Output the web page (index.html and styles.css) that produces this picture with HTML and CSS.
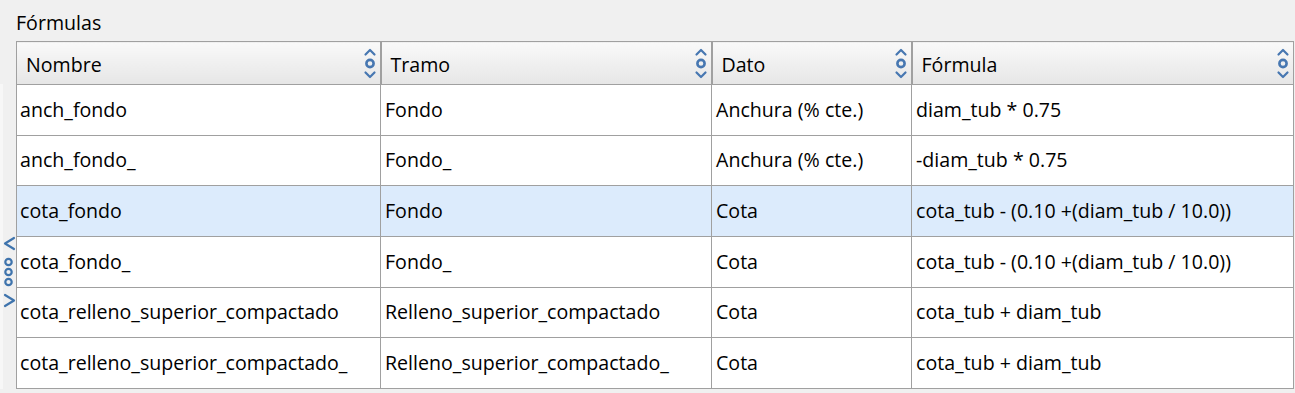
FILE: index.html
```html
<!DOCTYPE html>
<html lang="es">
<head>
<meta charset="utf-8">
<link rel="stylesheet" href="styles.css">
</head>
<body>
<div class="panel">
  <div class="title">Fórmulas</div>
  <div class="main">
    <div class="side">
      <div class="splitter">
        <svg width="14" height="72" viewBox="0 0 14 72">
          <g fill="none" stroke="#3f74ad" stroke-width="2.2" stroke-linecap="round" stroke-linejoin="round">
            <path d="M12 2 L3 7.5 L12 13"/>
            <circle cx="6.5" cy="26" r="3.2"/>
            <circle cx="6.5" cy="36" r="3.2"/>
            <circle cx="6.5" cy="46" r="3.2"/>
            <path d="M3 59 L12 64.5 L3 70"/>
          </g>
        </svg>
      </div>
    </div>
    <table class="grid">
      <colgroup>
        <col class="c1"><col class="c2"><col class="c3"><col class="c4">
      </colgroup>
      <thead>
        <tr>
          <th><span>Nombre</span><i class="sort"></i></th>
          <th><span>Tramo</span><i class="sort"></i></th>
          <th><span>Dato</span><i class="sort"></i></th>
          <th><span>Fórmula</span><i class="sort"></i></th>
        </tr>
      </thead>
      <tbody>
        <tr><td>anch_fondo</td><td>Fondo</td><td>Anchura (% cte.)</td><td>diam_tub * 0.75</td></tr>
        <tr><td>anch_fondo_</td><td>Fondo_</td><td>Anchura (% cte.)</td><td>-diam_tub * 0.75</td></tr>
        <tr class="sel"><td>cota_fondo</td><td>Fondo</td><td>Cota</td><td>cota_tub - (0.10 +(diam_tub / 10.0))</td></tr>
        <tr><td>cota_fondo_</td><td>Fondo_</td><td>Cota</td><td>cota_tub - (0.10 +(diam_tub / 10.0))</td></tr>
        <tr><td>cota_relleno_superior_compactado</td><td>Relleno_superior_compactado</td><td>Cota</td><td>cota_tub + diam_tub</td></tr>
        <tr><td>cota_relleno_superior_compactado_</td><td>Relleno_superior_compactado_</td><td>Cota</td><td>cota_tub + diam_tub</td></tr>
      </tbody>
    </table>
  </div>
</div>
</body>
</html>
```

FILE: styles.css
```css
html, body {
  margin: 0;
  padding: 0;
  background: #f0f0f0;
}
body {
  width: 1295px;
  height: 393px;
  overflow: hidden;
  font-family: "Open Sans", "Noto Sans", sans-serif;
  font-size: 19.6px;
  color: #000;
}
.panel {
  display: flex;
  flex-direction: column;
}
.title {
  height: 41px;
  box-sizing: border-box;
  padding: 10px 0 0 16px;
  line-height: 26px;
}
.main {
  display: flex;
}
.side {
  width: 16px;
  flex: none;
  position: relative;
}
.side::before {
  content: "";
  position: absolute;
  left: 0;
  top: 43px;
  bottom: 0;
  width: 3px;
  background: #f7f7f7;
}
.splitter {
  position: absolute;
  left: 2px;
  top: 195px;
}
.splitter svg { display: block; }
.grid {
  border-collapse: collapse;
  table-layout: fixed;
  width: 1277px;
  background: #fff;
}
.c1 { width: 364px; }
.c2 { width: 331px; }
.c3 { width: 200px; }
.c4 { width: 382px; }
.grid th {
  height: 43px;
  box-sizing: border-box;
  border: 1px solid #a0a0a0;
  border-left-width: 2px;
  background: linear-gradient(#f9f9f9, #e6e6e6);
  text-align: left;
  font-weight: normal;
  padding: 3px 0 0 9px;
  position: relative;
}
.grid th:first-child { border-left-width: 1px; padding-left: 9px; }
.grid th span { display: block; line-height: 26px; }
.sort {
  position: absolute;
  right: 3px;
  top: 4px;
  width: 14px;
  height: 34px;
  background: url("data:image/svg+xml;utf8,<svg xmlns='http://www.w3.org/2000/svg' width='14' height='34' viewBox='0 0 14 34'><g fill='none' stroke='%234777b1' stroke-width='2.2' stroke-linecap='round' stroke-linejoin='round'><path d='M2.5 8.5 L7 4 L11.5 8.5'/><circle cx='7' cy='17.5' r='3.6' stroke-width='2.6'/><path d='M2.5 26.5 L7 31 L11.5 26.5'/></g></svg>") no-repeat;
}
.grid td {
  height: 50.67px;
  box-sizing: border-box;
  border: 1px solid #a0a0a0;
  padding: 0 0 0 4px;
  white-space: nowrap;
  overflow: hidden;
  line-height: 26px;
}
.grid td:first-child { padding-left: 3px; }
.grid tr.sel td { background: #dcebfc; }
```
